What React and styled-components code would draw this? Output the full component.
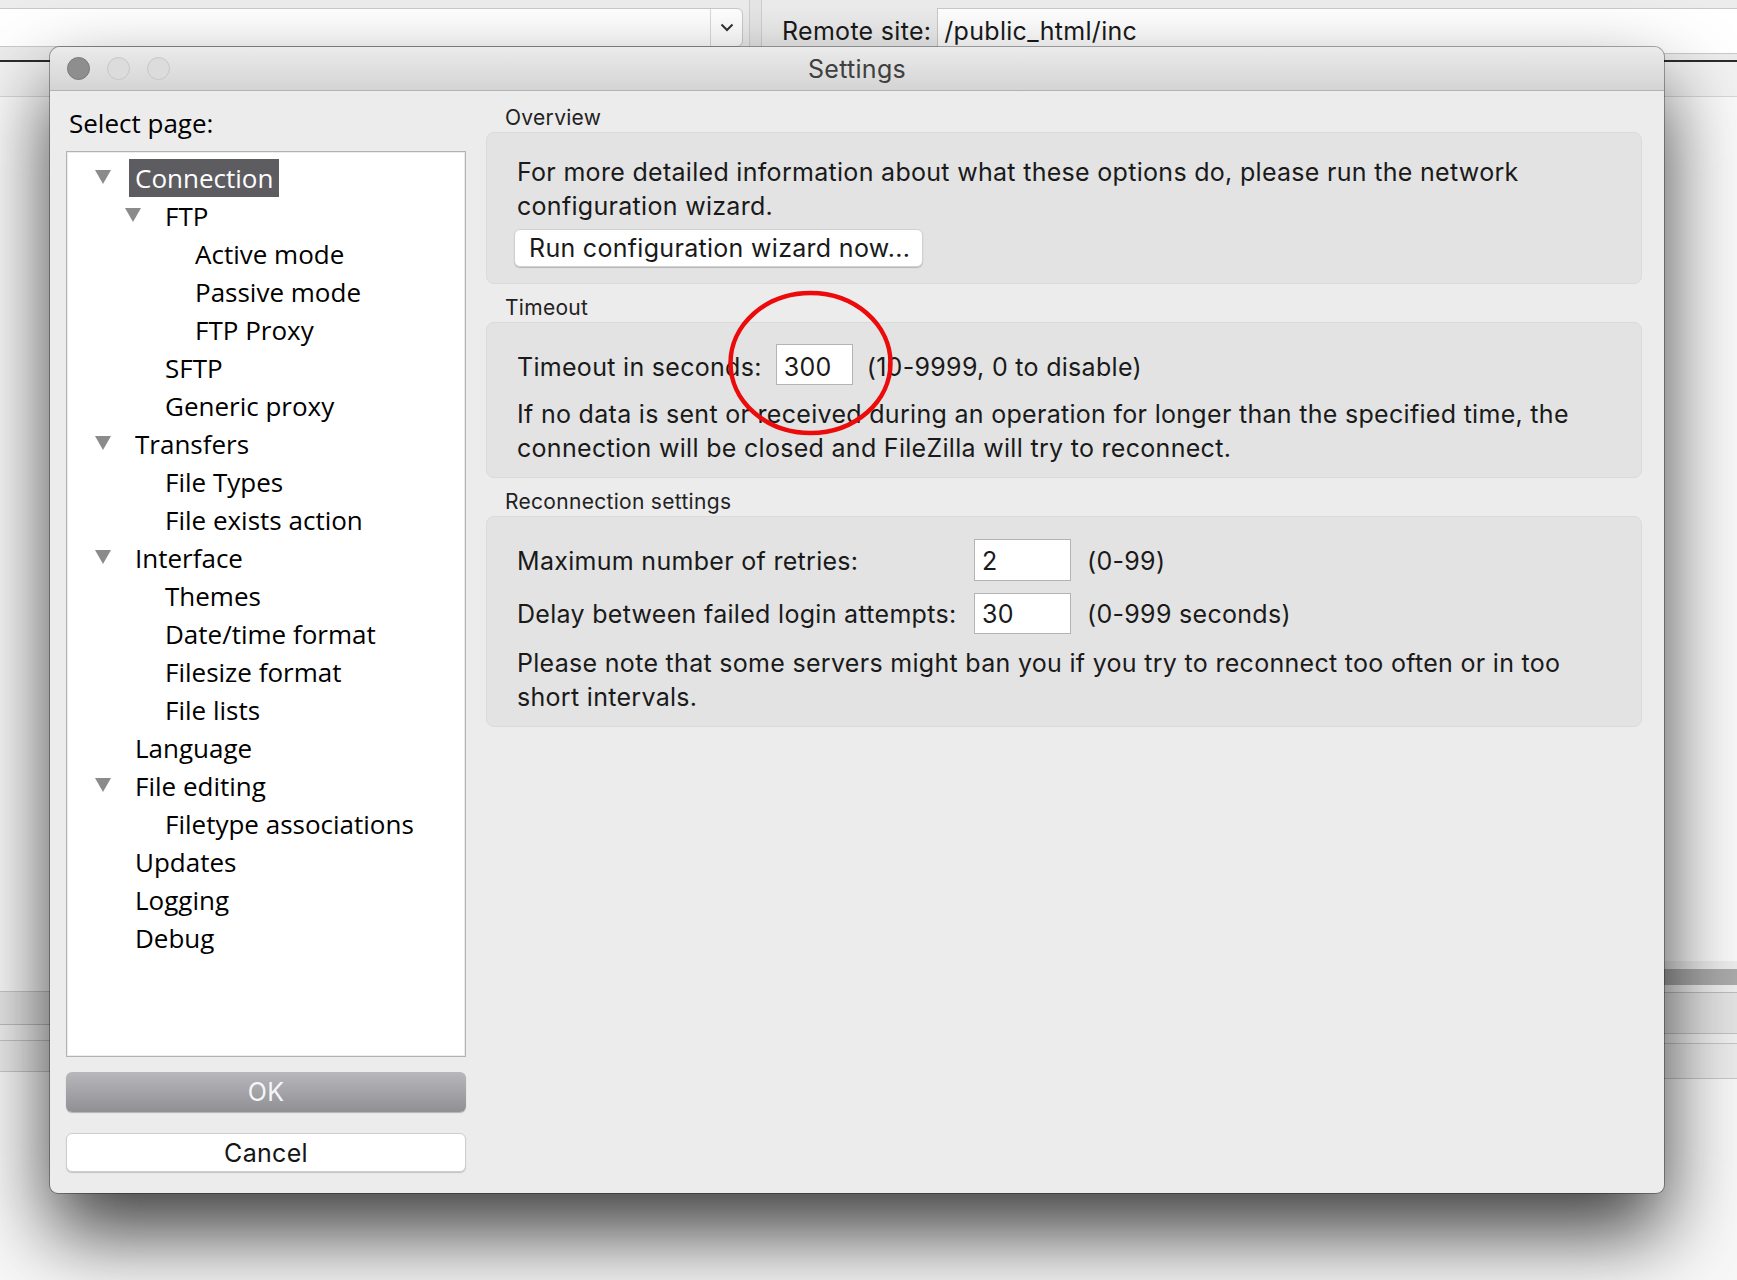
import React from 'react';
import styled, { createGlobalStyle } from 'styled-components';

const GlobalStyle = createGlobalStyle`
  html, body {
    margin: 0;
    padding: 0;
  }
  body {
    background: #f7f7f7;
    font-family: Inter, "Liberation Sans", sans-serif;
    color: #1d1d1d;
  }
`;

const uiFont = `Inter, "Liberation Sans", sans-serif`;
const treeFont = `"Open Sans", "DejaVu Sans", sans-serif`;

/* ---------- background app ---------- */

const Desktop = styled.div`
  position: relative;
  width: 1737px;
  height: 1280px;
  overflow: hidden;
  background: #f8f8f8;
  display: flex;
  flex-direction: column;
`;

const TopBar = styled.div`
  height: 60px;
  background: #ececec;
  display: flex;
  align-items: flex-start;
  padding-top: 8px;
  box-sizing: border-box;
`;

const Combo = styled.div`
  width: 745px;
  height: 39px;
  margin-left: -2px;
  box-sizing: border-box;
  background: #fff;
  border: 1px solid #c9c9c9;
  border-radius: 0 6px 6px 0;
  display: flex;
  justify-content: flex-end;
`;

const ComboArrow = styled.div`
  width: 31px;
  border-left: 1px solid #dadada;
  display: flex;
  align-items: center;
  justify-content: center;
`;

const Splitter = styled.div`
  width: 11px;
  height: 52px;
  margin: -8px 8px 0 6px;
  border-left: 1px solid #cfcfcf;
  border-right: 1px solid #cfcfcf;
  background: #e6e6e6;
`;

const RemoteLabel = styled.div`
  font-family: ${uiFont};
  font-size: 25px;
  letter-spacing: 0.3px;
  line-height: 46px;
  padding: 0 6px 0 12px;
  color: #1a1a1a;
`;

const PathInput = styled.div`
  flex: 1;
  height: 46px;
  box-sizing: border-box;
  background: #fff;
  border: 1px solid #c9c9c9;
  border-right: none;
  font-family: ${uiFont};
  font-size: 25px;
  letter-spacing: 0.3px;
  line-height: 44px;
  padding-left: 6px;
  color: #1a1a1a;
`;

const DarkRule = styled.div`
  height: 2px;
  background: #2b2b2b;
`;

const SubStrip = styled.div`
  height: 34px;
  background: #f2f2f2;
  border-bottom: 1px solid #d6d6d6;
`;

const MainArea = styled.div`
  flex: 1;
  background: #fafafa;
`;

const BottomPanes = styled.div`
  display: flex;
  height: 319px;
`;

const Pane = styled.div`
  display: flex;
  flex-direction: column;
  width: ${p => p.$width || 'auto'};
  flex: ${p => (p.$width ? 'none' : 1)};
`;

const Band = styled.div`
  height: ${p => p.$h}px;
  background: ${p => p.$bg};
  border-bottom: ${p => (p.$line ? `1px solid ${p.$line}` : 'none')};
`;

/* ---------- dialog ---------- */

const Dialog = styled.div`
  position: absolute;
  left: 50px;
  top: 47px;
  width: 1614px;
  height: 1146px;
  box-sizing: border-box;
  background: #ececec;
  border-radius: 10px 10px 8px 8px;
  box-shadow: 0 40px 80px rgba(0, 0, 0, 0.75), 0 0 0 1px rgba(0, 0, 0, 0.32);
  display: flex;
  flex-direction: column;
  overflow: hidden;
`;

const TitleBar = styled.div`
  position: relative;
  height: 44px;
  flex: none;
  box-sizing: border-box;
  background: linear-gradient(#ebebeb, #d4d4d4);
  border-bottom: 1px solid #b3b3b3;
  display: flex;
  align-items: center;
  justify-content: center;
`;

const Lights = styled.div`
  position: absolute;
  left: 17px;
  top: 10px;
  display: flex;
  gap: 17px;
`;

const Light = styled.span`
  width: 23px;
  height: 23px;
  box-sizing: border-box;
  border-radius: 50%;
  background: ${p => (p.$dark ? '#8e8e8f' : '#dcdcdc')};
  border: 1px solid ${p => (p.$dark ? '#7a7a7b' : '#c6c6c6')};
`;

const Title = styled.div`
  font-family: ${uiFont};
  font-size: 25px;
  letter-spacing: 0.3px;
  color: #3f3f3f;
`;

const Body = styled.div`
  flex: 1;
  display: flex;
  gap: 20px;
  padding: 0 22px 21px 16px;
  min-height: 0;
`;

const LeftCol = styled.div`
  width: 400px;
  display: flex;
  flex-direction: column;
`;

const SelectLabel = styled.div`
  font-family: ${treeFont};
  font-size: 26px;
  font-weight: 500;
  line-height: 30px;
  padding: 17px 0 0 3px;
  margin-bottom: 13px;
  color: #000;
`;

const TreeBox = styled.div`
  flex: 1;
  background: #fff;
  border: 1px solid #b2b2b2;
  box-shadow: inset 0 0 0 1px #ececec;
  padding-top: 7px;
  box-sizing: border-box;
`;

const TreeRow = styled.div`
  height: 38px;
  display: flex;
  align-items: center;
  padding-left: ${p => 28 + p.$level * 30}px;
  font-family: ${treeFont};
  font-size: 26px;
  font-weight: 500;
`;

const Twisty = styled.span`
  width: 40px;
  flex: none;
  display: flex;
  align-items: center;
  &::before {
    content: '';
    display: ${p => (p.$open ? 'block' : 'none')};
    border-left: 8.5px solid transparent;
    border-right: 8.5px solid transparent;
    border-top: 14px solid #8b8b8b;
    margin-top: -2px;
  }
`;

const NodeLabel = styled.span`
  margin-left: -6px;
  padding: 0 6px;
  line-height: 38px;
  color: ${p => (p.$selected ? '#fff' : '#000')};
  background: ${p => (p.$selected ? '#5d5d61' : 'transparent')};
`;

const OkButton = styled.div`
  margin-top: 15px;
  height: 40px;
  border-radius: 6px;
  background: linear-gradient(#b7b7bc, #8f8f94);
  box-shadow: 0 1px 1px rgba(0, 0, 0, 0.25);
  color: #f6f6f6;
  font-family: ${uiFont};
  font-size: 25px;
  letter-spacing: 0.3px;
  display: flex;
  align-items: center;
  justify-content: center;
`;

const CancelButton = styled.div`
  margin-top: 21px;
  height: 39px;
  box-sizing: border-box;
  border-radius: 6px;
  background: #fff;
  border: 1px solid #cdcdcd;
  box-shadow: 0 1px 1px rgba(0, 0, 0, 0.18);
  color: #151515;
  font-family: ${uiFont};
  font-size: 25px;
  letter-spacing: 0.3px;
  display: flex;
  align-items: center;
  justify-content: center;
`;

const RightCol = styled.div`
  flex: 1;
  padding-top: 13px;
  display: flex;
  flex-direction: column;
`;

const GroupLabel = styled.div`
  font-family: ${uiFont};
  font-size: 21px;
  letter-spacing: 0.3px;
  line-height: 28px;
  padding-left: 19px;
  margin-top: ${p => (p.$first ? 0 : 10)}px;
  color: #222;
`;

const GroupBox = styled.div`
  background: #e3e3e3;
  border: 1px solid #dadada;
  border-radius: 8px;
  padding: ${p => p.$pad};
  font-family: ${uiFont};
  font-size: 25px;
  letter-spacing: 0.3px;
  line-height: 34px;
  color: #1a1a1a;
`;

const Para = styled.div`
  margin-top: ${p => p.$mt || 0}px;
`;

const WideButton = styled.div`
  width: 409px;
  height: 38px;
  box-sizing: border-box;
  margin: 6px 0 0 -3px;
  padding-left: 14px;
  border-radius: 6px;
  background: #fff;
  border: 1px solid #d0d0d0;
  box-shadow: 0 1px 1px rgba(0, 0, 0, 0.2);
  display: flex;
  align-items: center;
`;

const FieldRow = styled.div`
  display: flex;
  align-items: baseline;
  gap: 14px;
`;

const FieldGrid = styled.div`
  display: grid;
  grid-template-columns: 441px 97px auto;
  column-gap: 16px;
  row-gap: 12px;
  align-items: baseline;
`;

const Field = styled.div`
  width: ${p => p.$w}px;
  height: ${p => p.$h || 41}px;
  box-sizing: border-box;
  background: #fff;
  border: 1px solid #b4b4b4;
  padding: ${p => p.$pt || 5}px 0 0 7px;
`;

const Annotation = styled.svg`
  position: absolute;
  left: 726px;
  top: 289px;
  pointer-events: none;
`;

const tree = [
  { label: 'Connection', level: 0, open: true, selected: true },
  { label: 'FTP', level: 1, open: true },
  { label: 'Active mode', level: 2 },
  { label: 'Passive mode', level: 2 },
  { label: 'FTP Proxy', level: 2 },
  { label: 'SFTP', level: 1 },
  { label: 'Generic proxy', level: 1 },
  { label: 'Transfers', level: 0, open: true },
  { label: 'File Types', level: 1 },
  { label: 'File exists action', level: 1 },
  { label: 'Interface', level: 0, open: true },
  { label: 'Themes', level: 1 },
  { label: 'Date/time format', level: 1 },
  { label: 'Filesize format', level: 1 },
  { label: 'File lists', level: 1 },
  { label: 'Language', level: 0 },
  { label: 'File editing', level: 0, open: true },
  { label: 'Filetype associations', level: 1 },
  { label: 'Updates', level: 0 },
  { label: 'Logging', level: 0 },
  { label: 'Debug', level: 0 },
];

const Background = () => (
  <>
    <TopBar>
      <Combo>
        <ComboArrow>
          <svg width="14" height="9" viewBox="0 0 14 9">
            <polyline points="1.5,1.5 7,7 12.5,1.5" fill="none" stroke="#333" strokeWidth="2" />
          </svg>
        </ComboArrow>
      </Combo>
      <Splitter />
      <RemoteLabel>Remote site:</RemoteLabel>
      <PathInput>/public_html/inc</PathInput>
    </TopBar>
    <DarkRule />
    <SubStrip />
    <MainArea />
    <BottomPanes>
      <Pane $width="800px">
        <Band $h={30} $bg="#fafafa" $line="#c8c8c8" />
        <Band $h={32} $bg="#e6e6e6" $line="#bdbdbd" />
        <Band $h={15} $bg="#efefef" $line="#c4c4c4" />
        <Band $h={30} $bg="#ebebeb" $line="#c8c8c8" />
      </Pane>
      <Pane>
        <Band $h={8} $bg="#ededed" />
        <Band $h={16} $bg="#ababab" />
        <Band $h={7} $bg="#eeeeee" $line="#bdbdbd" />
        <Band $h={40} $bg="#e4e4e4" $line="#c2c2c2" />
        <Band $h={9} $bg="#f0f0f0" $line="#c6c6c6" />
        <Band $h={34} $bg="#ececec" $line="#c8c8c8" />
      </Pane>
    </BottomPanes>
  </>
);

const App = () => (
  <>
    <GlobalStyle />
    <Desktop>
      <Background />
      <Dialog>
        <TitleBar>
          <Lights>
            <Light $dark />
            <Light />
            <Light />
          </Lights>
          <Title>Settings</Title>
        </TitleBar>
        <Body>
          <LeftCol>
            <SelectLabel>Select page:</SelectLabel>
            <TreeBox>
              {tree.map(node => (
                <TreeRow key={node.label} $level={node.level}>
                  <Twisty $open={node.open} />
                  <NodeLabel $selected={node.selected}>{node.label}</NodeLabel>
                </TreeRow>
              ))}
            </TreeBox>
            <OkButton>OK</OkButton>
            <CancelButton>Cancel</CancelButton>
          </LeftCol>
          <RightCol>
            <GroupLabel $first>Overview</GroupLabel>
            <GroupBox $pad="22px 30px 16px">
              <Para>
                For more detailed information about what these options do, please run the network
                <br />
                configuration wizard.
              </Para>
              <WideButton>Run configuration wizard now...</WideButton>
            </GroupBox>

            <GroupLabel>Timeout</GroupLabel>
            <GroupBox $pad="21px 30px 12px">
              <FieldRow>
                <span>Timeout in seconds:</span>
                <Field $w={77}>300</Field>
                <span>(10-9999, 0 to disable)</span>
              </FieldRow>
              <Para $mt={12}>
                If no data is sent or received during an operation for longer than the specified time, the
                <br />
                connection will be closed and FileZilla will try to reconnect.
              </Para>
            </GroupBox>

            <GroupLabel>Reconnection settings</GroupLabel>
            <GroupBox $pad="22px 30px 12px">
              <FieldGrid>
                <span>Maximum number of retries:</span>
                <Field $w={97} $h={42} $pt={4}>2</Field>
                <span>(0-99)</span>
                <span>Delay between failed login attempts:</span>
                <Field $w={97} $pt={3}>30</Field>
                <span>(0-999 seconds)</span>
              </FieldGrid>
              <Para $mt={12}>
                Please note that some servers might ban you if you try to reconnect too often or in too
                <br />
                short intervals.
              </Para>
            </GroupBox>
          </RightCol>
        </Body>
      </Dialog>
      <Annotation width="170" height="150" viewBox="0 0 170 150">
        <ellipse cx="84.5" cy="74" rx="80" ry="70" fill="none" stroke="#ec0a0a" strokeWidth="4.5" />
      </Annotation>
    </Desktop>
  </>
);

export default App;
